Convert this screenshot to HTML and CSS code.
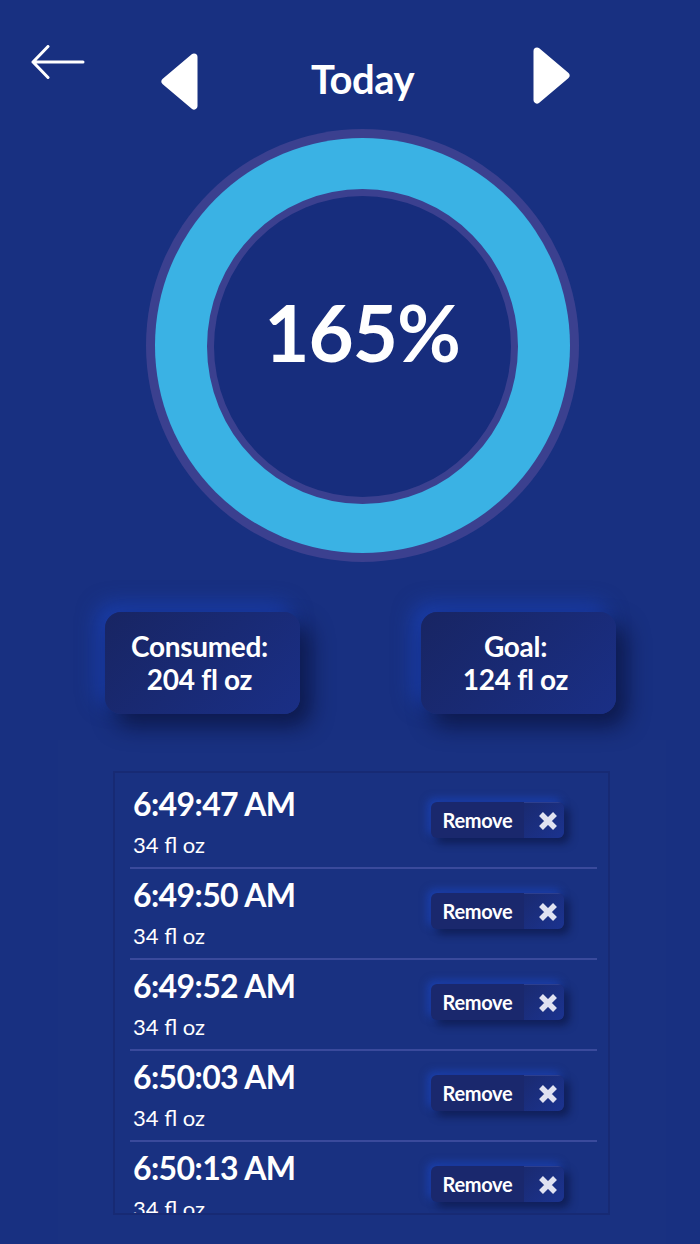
FILE: index.html
```html
<!DOCTYPE html>
<html lang="en">
<head>
<meta charset="utf-8">
<title>Today</title>
<link rel="stylesheet" href="styles.css">
</head>
<body>
<div class="app">
  <header class="top">
    <button class="back" aria-label="Back">
      <svg width="54" height="36" viewBox="0 0 54 36"><path d="M2 17 H52 M17 1.5 L2 17 L17 32.5" fill="none" stroke="#fff" stroke-width="3" stroke-linecap="round" stroke-linejoin="round"/></svg>
    </button>
    <button class="nav prev" aria-label="Previous day">
      <svg width="37" height="57" viewBox="0 0 37 57"><polygon points="33,4 4,28.5 33,53" fill="#fff" stroke="#fff" stroke-width="7" stroke-linejoin="round"/></svg>
    </button>
    <h1 class="title">Today</h1>
    <button class="nav next" aria-label="Next day">
      <svg width="37" height="57" viewBox="0 0 37 57"><polygon points="4,4 33,28.5 4,53" fill="#fff" stroke="#fff" stroke-width="7" stroke-linejoin="round"/></svg>
    </button>
  </header>

  <section class="gauge">
    <div class="ring">
      <div class="ring-fill">
        <div class="ring-inner">
          <span class="pct">165%</span>
        </div>
      </div>
    </div>
  </section>

  <section class="stats">
    <div class="card"><span>Consumed:</span><span>204 fl oz</span></div>
    <div class="card"><span>Goal:</span><span>124 fl oz</span></div>
  </section>

  <section class="log-panel">
    <div class="log">
      <div class="entry">
        <div class="entry-text"><div class="time">6:49:47 AM</div><div class="amount">34 fl oz</div></div>
        <button class="remove"><span class="remove-label">Remove</span><span class="remove-x"><svg width="20" height="20" viewBox="0 0 20 20"><path d="M3 3 L17 17 M17 3 L3 17" stroke="#e0e2f1" stroke-width="5.5"/></svg></span></button>
      </div>
      <div class="entry">
        <div class="entry-text"><div class="time">6:49:50 AM</div><div class="amount">34 fl oz</div></div>
        <button class="remove"><span class="remove-label">Remove</span><span class="remove-x"><svg width="20" height="20" viewBox="0 0 20 20"><path d="M3 3 L17 17 M17 3 L3 17" stroke="#e0e2f1" stroke-width="5.5"/></svg></span></button>
      </div>
      <div class="entry">
        <div class="entry-text"><div class="time">6:49:52 AM</div><div class="amount">34 fl oz</div></div>
        <button class="remove"><span class="remove-label">Remove</span><span class="remove-x"><svg width="20" height="20" viewBox="0 0 20 20"><path d="M3 3 L17 17 M17 3 L3 17" stroke="#e0e2f1" stroke-width="5.5"/></svg></span></button>
      </div>
      <div class="entry">
        <div class="entry-text"><div class="time">6:50:03 AM</div><div class="amount">34 fl oz</div></div>
        <button class="remove"><span class="remove-label">Remove</span><span class="remove-x"><svg width="20" height="20" viewBox="0 0 20 20"><path d="M3 3 L17 17 M17 3 L3 17" stroke="#e0e2f1" stroke-width="5.5"/></svg></span></button>
      </div>
      <div class="entry">
        <div class="entry-text"><div class="time">6:50:13 AM</div><div class="amount">34 fl oz</div></div>
        <button class="remove"><span class="remove-label">Remove</span><span class="remove-x"><svg width="20" height="20" viewBox="0 0 20 20"><path d="M3 3 L17 17 M17 3 L3 17" stroke="#e0e2f1" stroke-width="5.5"/></svg></span></button>
      </div>
    </div>
  </section>
</div>
</body>
</html>
```

FILE: styles.css
```css
* { box-sizing: border-box; }

html, body {
  margin: 0;
  padding: 0;
  background: #183081;
  height: 1244px;
  overflow: hidden;
}

body {
  font-family: Lato, "Open Sans", "DejaVu Sans", sans-serif;
  color: #fff;
}

button {
  font: inherit;
  color: inherit;
  background: none;
  border: 0;
  padding: 0;
  margin: 0;
  cursor: pointer;
}

.app {
  padding-left: 24px;
}

/* header */
.top {
  display: flex;
  align-items: flex-start;
  padding-top: 45px;
}

.back {
  display: block;
  margin-left: 7px;
  width: 54px;
  height: 36px;
}

.back svg, .nav svg, .remove-x svg { display: block; }

.nav {
  flex: none;
  width: 37px;
  height: 57px;
}

.prev {
  margin-left: 76px;
  margin-top: 8px;
}

.next {
  margin-top: 2px;
}

.title {
  flex: none;
  width: 335px;
  margin: 6px 0 0;
  height: 57px;
  line-height: 57px;
  text-align: center;
  font-size: 40px;
  font-weight: 700;
  letter-spacing: -0.5px;
  padding-right: 6px;
}

/* gauge */
.gauge {
  margin-top: 19px;
}

.ring {
  width: 433px;
  height: 433px;
  margin: 0 auto;
  border-radius: 50%;
  background: #3b408f;
  padding: 9px;
}

.ring-fill {
  width: 100%;
  height: 100%;
  border-radius: 50%;
  background: #3ab2e4;
  padding: 51px 52px 49px 52px;
}

.ring-inner {
  width: 100%;
  height: 100%;
  border-radius: 50%;
  background: #172d7d;
  border: 7px solid #3b408f;
  display: flex;
  align-items: center;
  justify-content: center;
}

.pct {
  font-size: 78px;
  font-weight: 700;
  letter-spacing: -1px;
  line-height: 1;
  margin-bottom: 30px;
}

/* stats */
.stats {
  margin-top: 50px;
  display: flex;
  justify-content: center;
  gap: 121px;
  padding-right: 3px;
}

.card {
  width: 195px;
  height: 102px;
  border-radius: 16px;
  background: linear-gradient(135deg, #182563 0%, #1a2f86 100%);
  box-shadow: 10px 12px 22px rgba(8, 12, 45, 0.65), -8px -8px 20px rgba(28, 72, 205, 0.55);
  display: flex;
  flex-direction: column;
  align-items: center;
  justify-content: center;
  font-size: 28px;
  font-weight: 700;
  line-height: 33px;
  letter-spacing: -0.3px;
  padding-right: 6px;
}

/* log */
.log-panel {
  margin-top: 26px;
  margin-left: 34px;
  width: 608px;
  height: 504px;
  padding: 31px 0 0 55px;
  background: #193181;
}

.log {
  width: 497px;
  height: 444px;
  border: 2px solid #172a74;
  overflow: hidden;
  padding-top: 5px;
}

.entry {
  margin: 0 11px 0 15px;
  height: 91px;
  border-bottom: 2px solid #3a4a9c;
  display: flex;
  align-items: center;
  justify-content: space-between;
  padding: 0 33px 0 3px;
}

.entry-text {
  align-self: flex-start;
  padding-top: 8px;
}

.time {
  font-size: 32px;
  font-weight: 700;
  line-height: 36px;
  letter-spacing: -0.6px;
}

.amount {
  font-size: 22px;
  line-height: 26px;
  margin-top: 10px;
}

.remove {
  flex: none;
  display: flex;
  height: 36px;
  width: 133px;
  border-radius: 6px;
  overflow: hidden;
  background: #1a286d;
  box-shadow: 5px 5px 8px rgba(8, 12, 45, 0.55), -3px -3px 8px rgba(30, 80, 220, 0.55);
  margin-top: -5px;
}

.remove-label {
  width: 93px;
  display: flex;
  align-items: center;
  justify-content: center;
  font-size: 20px;
  font-weight: 700;
  letter-spacing: -0.3px;
}

.remove-x {
  width: 40px;
  display: flex;
  align-items: center;
  justify-content: center;
  background: linear-gradient(135deg, #1a2a70 0%, #1b3390 100%);
  border-top: 1px solid #2d3f8e;
  padding-left: 8px;
}
```
